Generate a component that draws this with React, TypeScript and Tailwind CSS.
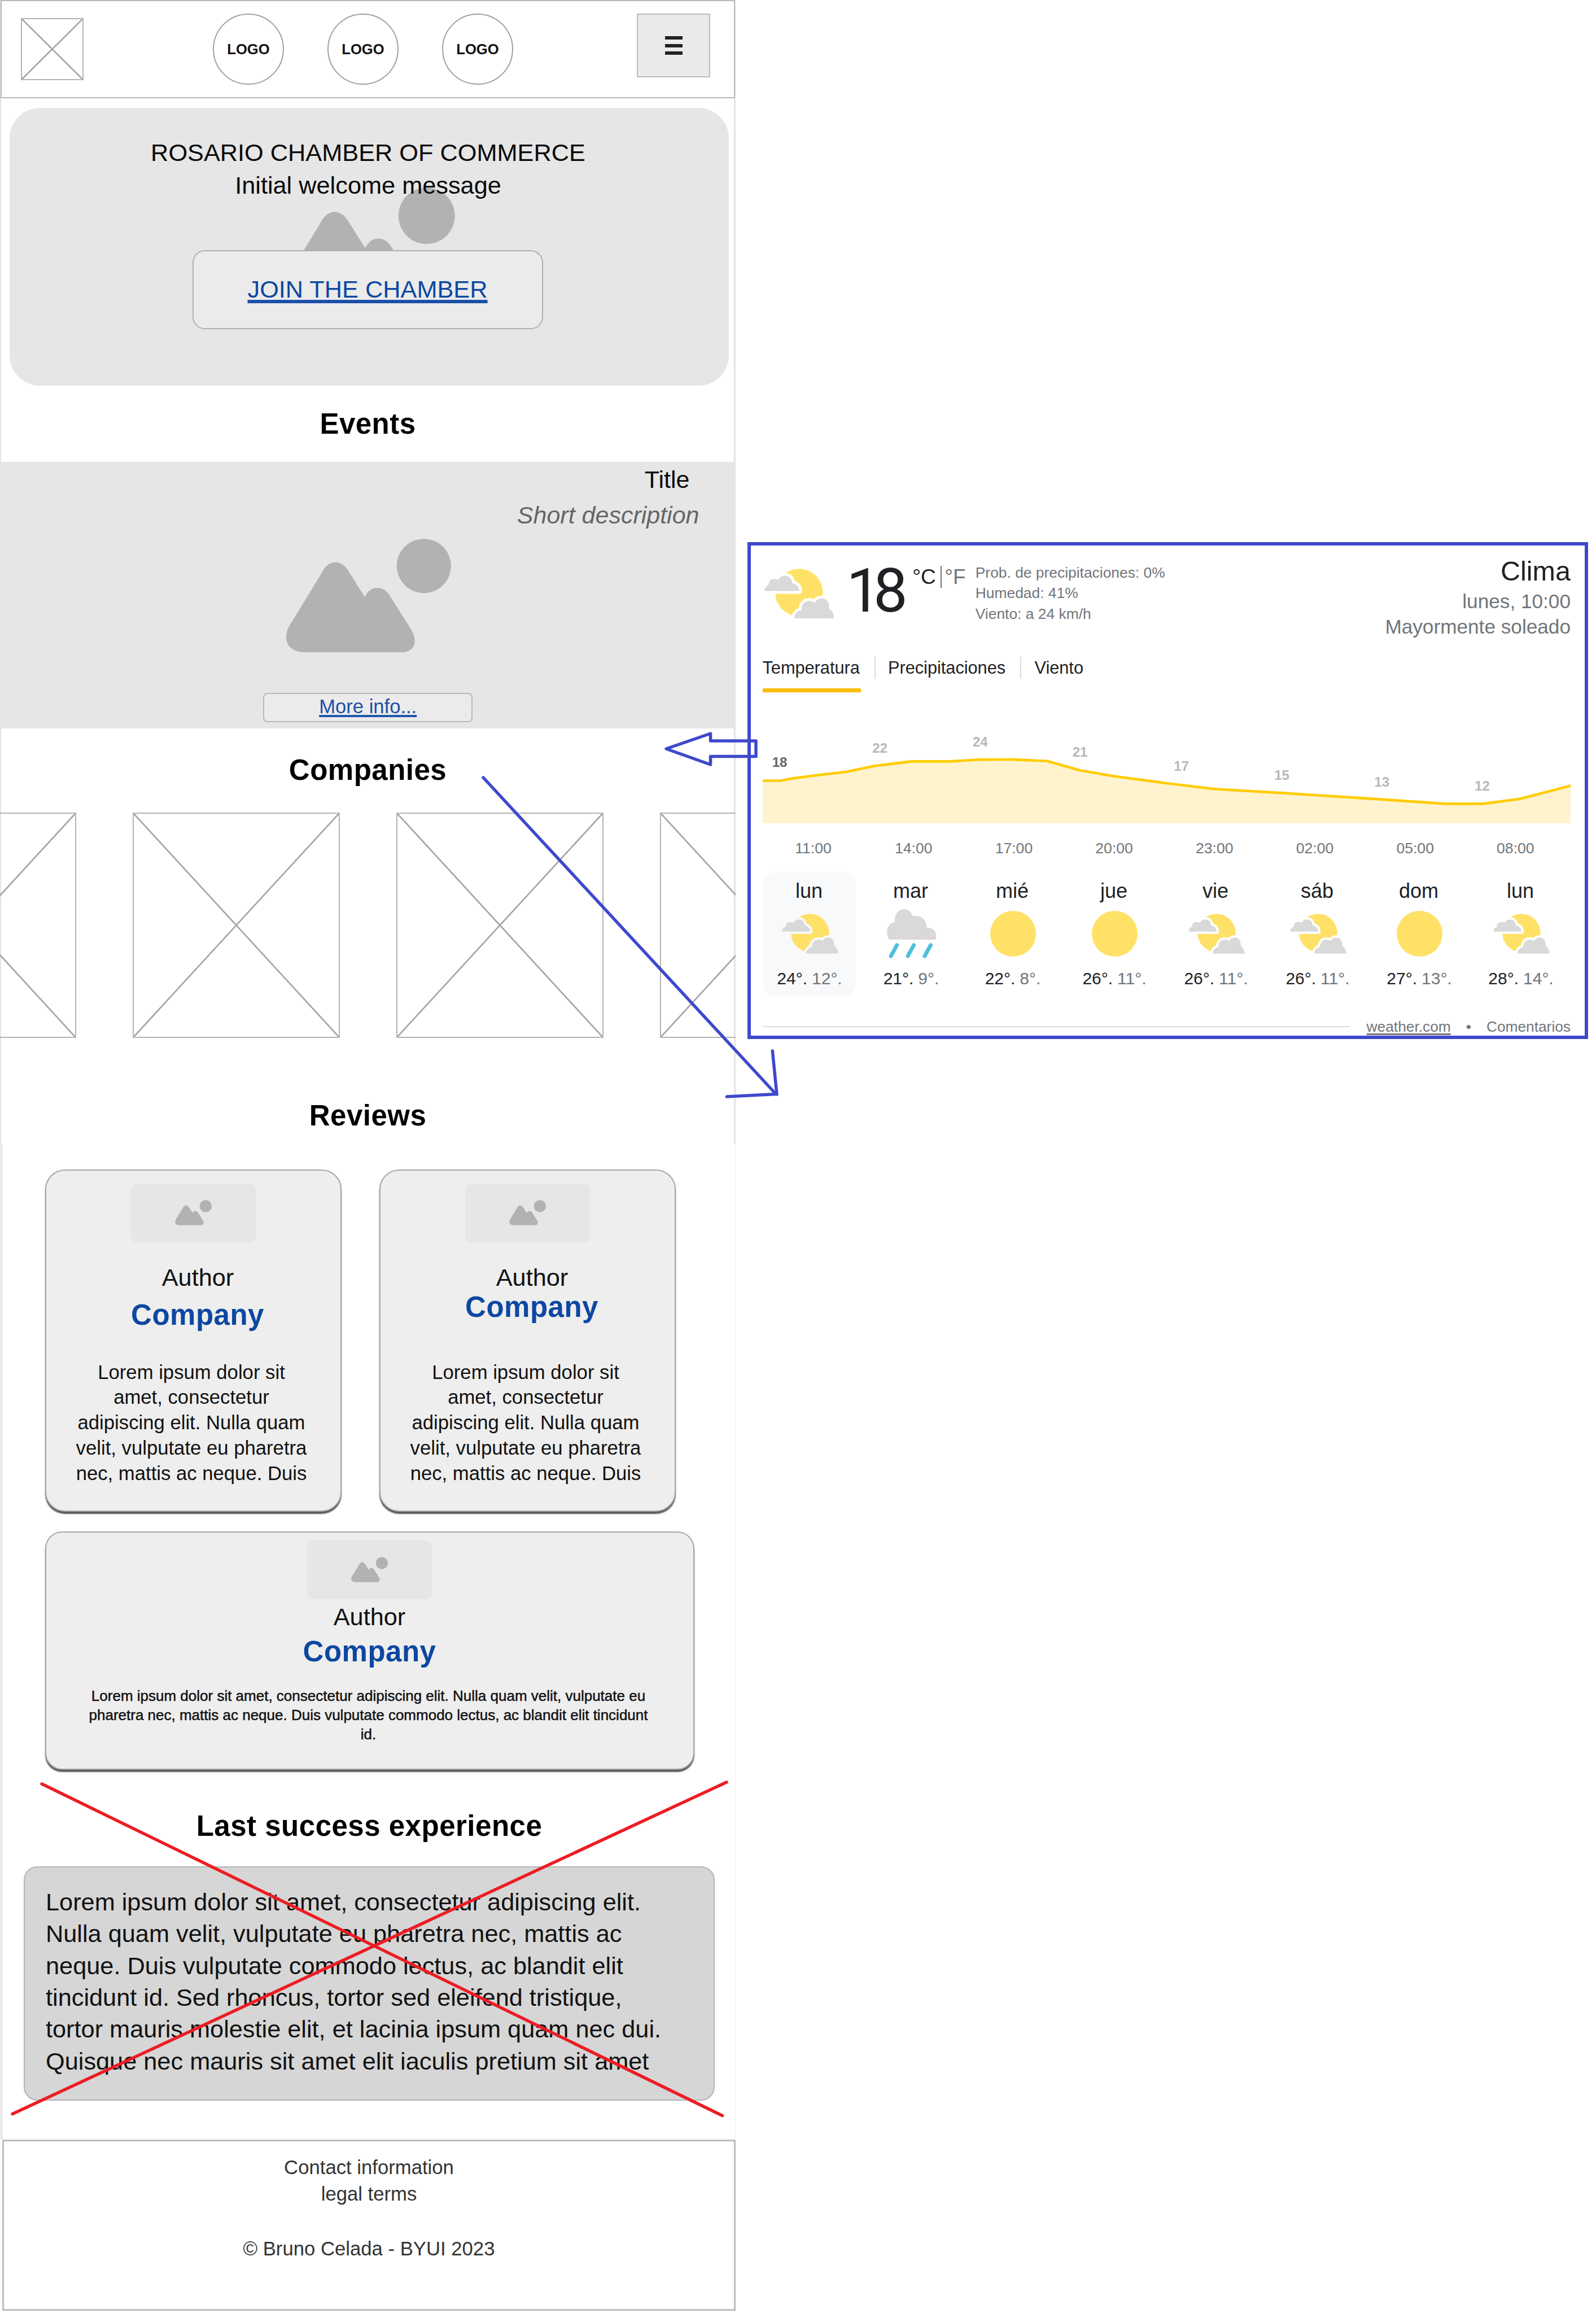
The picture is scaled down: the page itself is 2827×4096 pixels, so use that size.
import React from "react";

function CrossBox({ className }: { className: string }) {
  return (
    <div className={`shrink-0 border-2 border-[#b4b4b4] ${className}`}>
      <svg className="block h-full w-full" viewBox="0 0 100 100" preserveAspectRatio="none">
        <path
          d="M0 0L100 100M100 0L0 100"
          stroke="#a3a3a3"
          strokeWidth="2.6"
          fill="none"
          vectorEffect="non-scaling-stroke"
        />
      </svg>
    </div>
  );
}

function Mountains({ className }: { className: string }) {
  return (
    <svg className={className} viewBox="0 0 293 201" fill="#b2b2b2">
      <path d="M88 41.5C78 41.5 69 49 63 62L8 152C-8 178 4 201 33 201H205C227 201 235 184 223 162L184 100C178 91 171 87 162 87C153 87 146 92 140 103L113 60C107 49 98 41.5 88 41.5Z" />
      <circle cx="244.8" cy="48.2" r="48" />
    </svg>
  );
}

function PartlyCloudy({ className, gap }: { className: string; gap: string }) {
  const left =
    "M0 143C0 125 8 110 27 106C27 80 40 66 62 66C75 66 85 69 90 72C98 55 112 46 132 46C158 46 176 62 178 93C205 98 222 115 223 143Z";
  const right =
    "M192 318C192 290 208 270 237 266C237 228 255 207 287 207C303 207 315 212 322 219C330 200 345 190 367 190C398 190 416 212 415 258C435 268 445 290 445 318Z";
  return (
    <svg className={className} viewBox="0 0 445 319">
      <circle cx="222" cy="153" r="152" fill="#ffe168" />
      <path d={left} fill={gap} stroke={gap} strokeWidth="36" strokeLinejoin="round" />
      <path d={right} fill={gap} stroke={gap} strokeWidth="36" strokeLinejoin="round" />
      <path d={left} fill="#d9d9d9" />
      <path d={right} fill="#d9d9d9" />
    </svg>
  );
}

function Rain() {
  return (
    <svg className="h-[87px] w-[88px]" viewBox="0 0 362 358">
      <path
        fill="#d9d9d9"
        d="M17 222C-4 195 -5 150 15 120C25 105 40 97 57 95C55 38 80 0 125 0C155 0 178 20 187 50C245 40 290 68 290 135C335 135 360 160 360 195C360 208 358 216 354 222Z"
      />
      <path
        d="M73 262L29 342M196 262L152 342M319 262L275 342"
        stroke="#4dbfdb"
        strokeWidth="28"
        strokeLinecap="round"
      />
    </svg>
  );
}

function Sun() {
  return <div className="size-[81px] rounded-full bg-[#ffe168]" />;
}

function Heading({ children, className }: { children: React.ReactNode; className: string }) {
  return (
    <h2 className={`text-center text-[51px] leading-[60px] font-bold tracking-[0.5px] text-black ${className}`}>
      {children}
    </h2>
  );
}

function Placeholder() {
  return (
    <div className="flex h-[104px] w-[221px] shrink-0 items-center justify-center rounded-[10px] bg-[#e6e6e6]">
      <Mountains className="h-[45px] w-[65px]" />
    </div>
  );
}

const cardFrame =
  "flex flex-col items-center border-2 border-[#a8a8a8] bg-[#eeeeee] shadow-[0_4px_2px_#5c5c5c]";

function Review({ company, body }: { company: string; body: string }) {
  return (
    <div className={`h-[606px] w-[525px] rounded-[35px] pt-[23px] ${cardFrame}`}>
      <Placeholder />
      <p className="mt-[32px] pl-[16px] text-[43.3px] leading-[60px] text-[#111]">Author</p>
      <p className={`pl-[15px] text-[51px] leading-[60px] font-bold tracking-[0.5px] text-[#0d47a1] ${company}`}>
        Company
      </p>
      <p className={`pr-[7px] text-center text-[34.7px] leading-[44.8px] whitespace-nowrap text-[#111] ${body}`}>
        Lorem ipsum dolor sit
        <br />
        amet, consectetur
        <br />
        adipiscing elit. Nulla quam
        <br />
        velit, vulputate eu pharetra
        <br />
        nec, mattis ac neque. Duis
      </p>
    </div>
  );
}

const hourly = [
  { t: 18, x: 30, y: 132.4 },
  { t: 22, x: 207.5, y: 107.2 },
  { t: 24, x: 385.3, y: 95.5 },
  { t: 21, x: 562, y: 114.4 },
  { t: 17, x: 741.5, y: 139.3 },
  { t: 15, x: 919.5, y: 155.3 },
  { t: 13, x: 1096.7, y: 167 },
  { t: 12, x: 1274.4, y: 174.3 },
];

const hours = ["11:00", "14:00", "17:00", "20:00", "23:00", "02:00", "05:00", "08:00"];

const days = [
  { day: "lun", icon: "cloudy", hi: 24, lo: 12 },
  { day: "mar", icon: "rain", hi: 21, lo: 9 },
  { day: "mié", icon: "sun", hi: 22, lo: 8 },
  { day: "jue", icon: "sun", hi: 26, lo: 11 },
  { day: "vie", icon: "cloudy", hi: 26, lo: 11 },
  { day: "sáb", icon: "cloudy", hi: 26, lo: 11 },
  { day: "dom", icon: "sun", hi: 27, lo: 13 },
  { day: "lun", icon: "cloudy", hi: 28, lo: 14 },
];

const curve =
  "0 156.5 32 156.5 52 152.6 100 146.3 147 141 197 130.5 263.5 122.4 330 122.4 382.5 119.2 440.5 118.9 504 121.8 562.5 138.2 623.5 148.8 713.2 160.7 800.8 171.2 922.5 178.4 1092.8 189.4 1209.5 197.4 1275.3 197.4 1341 188.7 1431.5 165.2";

function Weather() {
  return (
    <aside className="mt-[959.5px] ml-[21px] flex h-[880.5px] w-[1489px] shrink-0 flex-col border-[6px] border-[#3f48cc] pr-[25px] pl-[20.5px] text-[#202124]">
      <div className="flex h-[197px] shrink-0 items-start">
        <PartlyCloudy className="mt-[41px] ml-[3.5px] h-[88.4px] w-[123.3px]" gap="#ffffff" />
        <span className="mt-[27px] ml-[22px] w-[95px] font-['Roboto'] text-[108px] leading-[107px] tracking-[-13px]">18</span>
        <span className="mt-[36.5px] ml-[22px] text-[37px] leading-[40px]">°C</span>
        <span className="mt-[36.5px] ml-[8.5px] h-[39px] w-[2px] bg-[#70757a]" />
        <span className="mt-[36.5px] ml-[5px] text-[37px] leading-[40px] text-[#70757a]">°F</span>
        <div className="mt-[30px] ml-[17px] text-[26.4px] leading-[36.8px] whitespace-nowrap text-[#70757a]">
          <p>Prob. de precipitaciones: 0%</p>
          <p>Humedad: 41%</p>
          <p>Viento: a 24 km/h</p>
        </div>
        <div className="mt-[21.5px] ml-auto text-right whitespace-nowrap text-[#70757a]">
          <p className="text-[48.5px] leading-[48px] text-[#202124]">Clima</p>
          <p className="mt-[6.5px] text-[35.2px] leading-[45.8px]">lunes, 10:00</p>
          <p className="text-[35.2px] leading-[45.8px]">Mayormente soleado</p>
        </div>
      </div>
      <div className="flex h-[63px] shrink-0 text-[30.7px] leading-[40px]">
        <span className="w-[174px] border-b-[7px] border-[#fbbc04] whitespace-nowrap">Temperatura</span>
        <span className="ml-[24px] h-[39px] w-[2px] bg-[#dadce0]" />
        <span className="ml-[22.5px] w-[210px]">Precipitaciones</span>
        <span className="ml-[23.5px] h-[39px] w-[2px] bg-[#dadce0]" />
        <span className="ml-[24px]">Viento</span>
      </div>
      <svg className="h-[232px] w-[1431.5px] shrink-0 overflow-hidden" viewBox="0 0 1431.5 232">
        <polygon points={`${curve} 1431.5 232 0 232`} fill="#fff3cd" />
        <polyline points={curve} fill="none" stroke="#ffcc00" strokeWidth="4.6" strokeLinejoin="round" />
        {hourly.map((p) => (
          <text
            key={p.t}
            x={p.x}
            y={p.y}
            textAnchor="middle"
            fontSize="24"
            fontWeight="bold"
            fill={p.t === 18 ? "#666666" : "#b7b7b7"}
          >
            {p.t}
          </text>
        ))}
      </svg>
      <div className="mt-[24.6px] flex pl-[1.2px] text-[26.6px] leading-[40px] text-[#70757a]">
        {hours.map((h) => (
          <span key={h} className="w-[177.7px] shrink-0 text-center">
            {h}
          </span>
        ))}
      </div>
      <div className="mt-[22px] flex gap-[15px]">
        {days.map((d, i) => (
          <div
            key={i}
            className={`flex h-[220.6px] w-[165px] shrink-0 flex-col items-center rounded-[24px] pt-[11.6px] ${i === 0 ? "bg-[#f8f9fb]" : ""}`}
          >
            <span className="text-[36px] leading-[44px]">{d.day}</span>
            <div className="mt-[8.6px] flex h-[90px] items-center justify-center pl-[3px]">
              {d.icon === "cloudy" && (
                <PartlyCloudy className="h-[71px] w-[100px]" gap={i === 0 ? "#f8f9fb" : "#ffffff"} />
              )}
              {d.icon === "rain" && <Rain />}
              {d.icon === "sun" && <Sun />}
            </div>
            <div className="mt-[14.8px] flex gap-[8px] pl-[2px] text-[30px] leading-[40px]">
              <span>{d.hi}°.</span>
              <span className="text-[#70757a]">{d.lo}°.</span>
            </div>
          </div>
        ))}
      </div>
      <div className="mt-[38.4px] flex items-center text-[26.3px] leading-[30px] text-[#70757a]">
        <span className="h-[2px] w-[1040px] bg-[#dadce0]" />
        <span className="ml-auto underline decoration-[3px] underline-offset-[3px]">weather.com</span>
        <span className="mx-[27px]">•</span>
        <span>Comentarios</span>
      </div>
    </aside>
  );
}

function Annotations() {
  return (
    <svg className="pointer-events-none absolute top-0 left-0" width="2827" height="4096" fill="none" strokeLinecap="round">
      <g stroke="#3f48cc" strokeWidth="5.5">
        <path d="M1180 1326L1258.5 1299V1312H1339V1339.6H1258.5V1354L1180 1326Z" strokeLinejoin="round" />
        <path d="M856 1377L1374 1937" />
        <path d="M1368.3 1861L1376 1938" />
        <path d="M1287.5 1942L1375 1937.5" />
      </g>
      <g stroke="#ed1c24" strokeWidth="5.5">
        <path d="M74 3159L1279.5 3746.5" />
        <path d="M1287 3156L22 3743.5" />
      </g>
    </svg>
  );
}

export default function App() {
  return (
    <div className="relative flex h-[4096px] w-[2827px] items-start overflow-hidden bg-white font-['Liberation_Sans',Arial,sans-serif]">
      <main className="flex h-[4096px] w-[1303px] shrink-0 flex-col">
        <section className="flex h-[2026px] shrink-0 flex-col shadow-[inset_2px_0_#e4e4e4,inset_-3px_0_#e4e4e4]">
          <header className="mr-px ml-px flex h-[174px] shrink-0 items-start border-[2.6px] border-[#b8b8b8]">
            <CrossBox className="mt-[30px] ml-[34px] h-[110px] w-[111px]" />
            <div className="mt-[22px] ml-[229px] flex gap-[77px]">
              {[0, 1, 2].map((n) => (
                <div
                  key={n}
                  className="flex size-[126px] items-center justify-center rounded-full border-2 border-[#a0a0a0] text-[25.6px] font-bold text-[#111]"
                >
                  LOGO
                </div>
              ))}
            </div>
            <button className="mt-[22px] ml-[219px] flex h-[113px] w-[130px] flex-col items-center justify-center gap-[7.5px] border-2 border-[#bcbcbc] bg-[#eaeaea]">
              <span className="h-[6px] w-[31px] bg-[#222]" />
              <span className="h-[6px] w-[31px] bg-[#222]" />
              <span className="h-[6px] w-[31px] bg-[#222]" />
            </button>
          </header>

          <div className="relative mt-[16.6px] ml-[16.5px] flex h-[492.4px] w-[1274px] shrink-0 flex-col items-center rounded-[54px] bg-[#e6e6e6] pt-[50.9px] text-[43.3px] leading-[58px] text-[#0a0a0a]">
            <Mountains className="absolute top-[141.5px] left-[484px] h-[209px] w-[305px]" />
            <p className="relative pr-[3px]">ROSARIO CHAMBER OF COMMERCE</p>
            <p className="relative pr-[3px]">Initial welcome message</p>
            <a className="relative mt-[85.5px] mr-[5px] flex h-[140px] w-[621px] items-center justify-center rounded-[22px] border-2 border-[#b0b0b0] bg-[#ebebeb] pb-[2px] text-[#0d47a1] underline decoration-[#1a50a8] decoration-[6px] underline-offset-[4px] [text-decoration-skip-ink:none]">
              JOIN THE CHAMBER
            </a>
          </div>

          <Heading className="mt-[38.5px]">Events</Heading>
          <div className="mt-[36.5px] mr-[1.5px] ml-[2px] flex h-[472px] shrink-0 flex-col bg-[#e6e6e6] text-[43px] leading-[63px]">
            <p className="pr-[80px] text-right text-[#0a0a0a]">Title</p>
            <p className="pr-[63px] text-right text-[#666] italic">Short description</p>
            <Mountains className="mt-[10px] ml-[504px] h-[201px] w-[293px]" />
            <a className="mt-[72px] flex h-[52px] w-[371px] items-center justify-center self-center rounded-[8px] border-2 border-[#b8b8b8] bg-[#ebebeb] pb-[2px] text-[34.6px] text-[#1e4fa5] underline decoration-[#1f57ad] decoration-[4px] underline-offset-[3px]">
              More info...
            </a>
          </div>

          <Heading className="mt-[44px]">Companies</Heading>
          <div className="mt-[45.3px] flex gap-[100px] overflow-hidden">
            <CrossBox className="ml-[-232px] h-[399px] w-[367px]" />
            <CrossBox className="h-[399px] w-[367px]" />
            <CrossBox className="h-[399px] w-[367px]" />
            <CrossBox className="h-[399px] w-[367px]" />
          </div>

          <Heading className="mt-[107.5px]">Reviews</Heading>
        </section>

        <section className="flex h-[1762.5px] shrink-0 flex-col pt-[44.5px] shadow-[inset_5px_0_#ebebeb,inset_-1px_0_#f0f0f0]">
          <div className="flex gap-[67px] pl-[80px]">
            <Review company="mt-[7px]" body="mt-[49px]" />
            <Review company="mt-[-6.6px]" body="mt-[62.6px]" />
          </div>
          <div className={`mt-[35px] ml-[79.5px] h-[422px] w-[1150px] rounded-[30px] pt-[14px] ${cardFrame}`}>
            <Placeholder />
            <p className="mt-[1.5px] text-[43.3px] leading-[60px] text-[#111]">Author</p>
            <p className="mt-[2px] text-[51px] leading-[60px] font-bold tracking-[0.5px] text-[#0d47a1]">Company</p>
            <p className="mt-[32px] pr-[4px] text-center text-[26px] leading-[33.8px] whitespace-nowrap text-[#111] [-webkit-text-stroke:0.5px_#111]">
              Lorem ipsum dolor sit amet, consectetur adipiscing elit. Nulla quam velit, vulputate eu
              <br />
              pharetra nec, mattis ac neque. Duis vulputate commodo lectus, ac blandit elit tincidunt
              <br />
              id.
            </p>
          </div>
          <Heading className="mt-[70px] pl-[5px]">Last success experience</Heading>
          <div className="mt-[41.5px] ml-[42px] h-[415px] w-[1224px] shrink-0 rounded-[24px] border-2 border-[#b4b4b4] bg-[#d6d6d6] pt-[33px] pl-[37px] text-[43.3px] leading-[56.35px] whitespace-nowrap text-[#111]">
            Lorem ipsum dolor sit amet, consectetur adipiscing elit.
            <br />
            Nulla quam velit, vulputate eu pharetra nec, mattis ac
            <br />
            neque. Duis vulputate commodo lectus, ac blandit elit
            <br />
            tincidunt id. Sed rhoncus, tortor sed eleifend tristique,
            <br />
            tortor mauris molestie elit, et lacinia ipsum quam nec dui.
            <br />
            Quisque nec mauris sit amet elit iaculis pretium sit amet
          </div>
        </section>

        <footer className="ml-[4px] h-[303px] shrink-0 border-[3px] border-[#bdbdbd] pt-[23.5px] text-center text-[34.7px] leading-[47.2px] text-[#333]">
          <p>Contact information</p>
          <p>legal terms</p>
          <p className="mt-[49.5px]">© Bruno Celada - BYUI 2023</p>
        </footer>
      </main>
      <Weather />
      <Annotations />
    </div>
  );
}
